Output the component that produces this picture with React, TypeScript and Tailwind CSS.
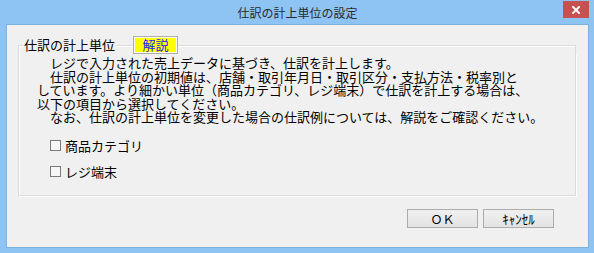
export default function App() {
  const font = "font-['Noto_Sans_CJK_JP','Noto_Sans',sans-serif]";
  return (
    <div className={`w-[594px] h-[253px] bg-[#8ec4f4] flex flex-col pl-[6px] pr-[5px] pb-[5px] ${font} text-black`}>
      {/* title bar */}
      <div className="h-[24px] grid grid-cols-[1fr_auto_1fr] items-start shrink-0">
        <div />
        <div className="text-[12px] leading-[26px] text-[#2a2a2a]">仕訳の計上単位の設定</div>
        <div className="flex justify-end">
          <div className="mt-[1px] h-[17px] w-[26px] bg-[#c75050] flex items-center justify-center">
            <svg width="8" height="8" viewBox="0 0 8 8">
              <path d="M1 1 L7 7 M7 1 L1 7" stroke="white" strokeWidth="1.9" strokeLinecap="square" />
            </svg>
          </div>
        </div>
      </div>

      {/* client area */}
      <div className="flex-1 border border-[#7fb1df] bg-[#f0f0f0] flex flex-col">
        {/* group box */}
        <div className="mt-[11px] ml-[11px] mr-[12px] flex flex-col">
          <div className="flex h-[18px] items-center">
            <div className="self-end h-[9px] w-[5px] border-l border-t border-[#dcdcdc] shadow-[inset_1px_1px_0_#ffffff]" />
            <div className="pl-[1px] pr-[2px] text-[13px] leading-[18px]">仕訳の計上単位</div>
            <div className="self-end h-[9px] w-[16px] border-t border-[#dcdcdc] shadow-[inset_0_1px_0_#ffffff]" />
            <div className="h-[18px] w-[45px] border border-[#adadad] bg-[#ffff00] shadow-[inset_0_0_0_1px_#fefef0] flex items-center justify-center text-[13px] leading-[16px] text-[#1a1aff]">
              解説
            </div>
            <div className="self-end flex-1 h-[9px] border-t border-r border-[#dcdcdc] shadow-[inset_0_1px_0_#ffffff]" />
          </div>
          <div className="border-l border-r border-b border-[#dcdcdc] shadow-[inset_1px_0_0_#ffffff,1px_1px_0_#ffffff] pl-[18px] pt-[2px] pb-[15px] text-[13px] leading-[13.5px] whitespace-nowrap">
            <p>　レジで入力された売上データに基づき、仕訳を計上します。</p>
            <p>　仕訳の計上単位の初期値は、店舗・取引年月日・取引区分・支払方法・税率別と</p>
            <p>しています。より細かい単位（商品カテゴリ、レジ端末）で仕訳を計上する場合は、</p>
            <p>以下の項目から選択してください。</p>
            <p>　なお、仕訳の計上単位を変更した場合の仕訳例については、解説をご確認ください。</p>
            <div className="mt-[14px] flex flex-col gap-[10px] pl-[13px]">
              <label className="flex items-center h-[16px] gap-[4px]">
                <span className="w-[11px] h-[11px] border border-[#7a7a7a] bg-[#f6f6f6] shrink-0" />
                <span className="leading-[16px]">商品カテゴリ</span>
              </label>
              <label className="flex items-center h-[16px] gap-[4px]">
                <span className="w-[11px] h-[11px] border border-[#7a7a7a] bg-[#f6f6f6] shrink-0" />
                <span className="leading-[16px]">レジ端末</span>
              </label>
            </div>
          </div>
        </div>

        {/* buttons */}
        <div className="mt-[13px] mr-[34px] flex justify-end gap-[5px]">
          <div className="w-[71px] h-[19px] border border-[#acacac] bg-linear-to-b from-[#f0f0f0] to-[#e3e3e3] flex items-center justify-center text-[12px] leading-[17px]">
            ＯＫ
          </div>
          <div className="w-[71px] h-[19px] border border-[#acacac] bg-linear-to-b from-[#f0f0f0] to-[#e3e3e3] flex items-center justify-center text-[13px] leading-[17px]">
            ｷｬﾝｾﾙ
          </div>
        </div>
      </div>
    </div>
  );
}
